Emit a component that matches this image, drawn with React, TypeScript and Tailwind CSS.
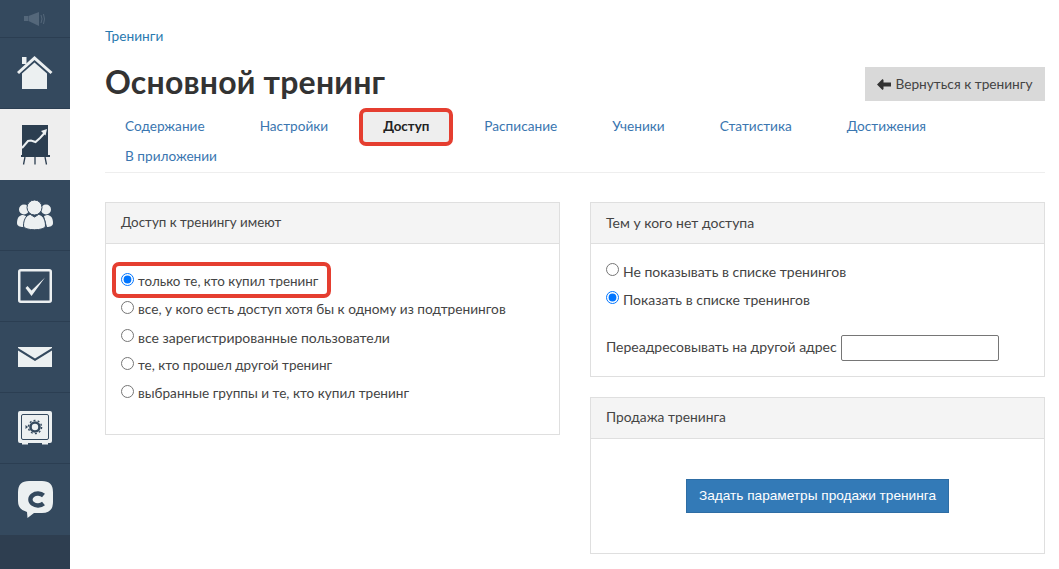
import type { ReactNode } from "react";

const sideClass = "flex h-[71px] items-center justify-center border-b border-[#2b3e52] bg-[#34495e]";

function Home() {
  return (
    <svg width="36" height="34" viewBox="0 0 36 34" fill="#ecf0f1">
      <rect x="5" y="1" width="4.5" height="7" />
      <path d="M17.5 0 L35.5 16 L33.5 18 L17.5 4 L2 18 L0 16 Z" />
      <path d="M5 17.5 L17.5 6.5 L30 17.5 V33 H5 Z" />
    </svg>
  );
}

function Chart() {
  return (
    <svg width="29" height="40" viewBox="0 0 29 40">
      <rect x="1" y="0" width="26" height="30" fill="#2c3e50" />
      <path d="M1 23 L7 16 L10 15.5 L14.5 17 L19 13 L23.5 8" fill="none" stroke="#ecf0f1" strokeWidth="2" />
      <path d="M20 6 L26 4 L24.5 10.5 Z" fill="#ecf0f1" />
      <rect x="0" y="30" width="29" height="2" fill="#2c3e50" />
      <path d="M4 32 L2.5 39.5 M14 32 V39.5 M24 32 L25.5 39.5" stroke="#2c3e50" strokeWidth="1.3" fill="none" />
    </svg>
  );
}

function People() {
  return (
    <svg width="36" height="31" viewBox="0 0 36 31" fill="#ecf0f1">
      <circle cx="7" cy="9.5" r="5" />
      <circle cx="29" cy="9.5" r="5" />
      <path d="M0 23 C0 17 3 15 6 15 L9 16 L6 27 C3 27 0 26 0 23 Z" />
      <path d="M36 23 C36 17 33 15 30 15 L27 16 L30 27 C33 27 36 26 36 23 Z" />
      <circle cx="17.5" cy="7.5" r="7.5" stroke="#34495e" strokeWidth="1" />
      <path d="M6.5 26 C6.5 18 10.5 14.5 13.5 14.5 L17.5 17 L21.5 14.5 C24.5 14.5 28.5 18 28.5 26 C28.5 31 6.5 31 6.5 26 Z" stroke="#34495e" strokeWidth="1" />
    </svg>
  );
}

function Check() {
  return (
    <svg width="34" height="34" viewBox="0 0 34 34" fill="none">
      <rect x="1.25" y="1.25" width="31.5" height="31.5" rx="1.5" stroke="#ecf0f1" strokeWidth="2.5" />
      <path d="M7.5 19 L9.5 17 L13.5 21.5 L27 8.5 L13.5 27 Z" fill="#ecf0f1" />
    </svg>
  );
}

function Mail() {
  return (
    <svg width="34" height="20" viewBox="0 0 34 20" fill="#ecf0f1">
      <path d="M0 1 L17 11.5 L34 1 V0 H0 Z" />
      <path d="M0 3.5 L17 14 L34 3.5 V20 H0 Z" />
    </svg>
  );
}

function Safe() {
  return (
    <svg width="34" height="34" viewBox="0 0 34 34">
      <path d="M2 0 H32 Q34 0 34 2 V30 Q34 32 32 32 H30 V33.5 H24 V32 H10 V33.5 H4 V32 H2 Q0 32 0 30 V2 Q0 0 2 0 Z" fill="#ecf0f1" />
      <rect x="3.5" y="3.5" width="27" height="25" rx="1.5" fill="none" stroke="#34495e" strokeWidth="1" />
      <circle cx="17" cy="16" r="4.5" fill="none" stroke="#34495e" strokeWidth="2.6" />
      <circle cx="17" cy="16" r="6.6" fill="none" stroke="#34495e" strokeWidth="1.4" strokeDasharray="2 2.2" />
      <path d="M7.5 14 L10 16 L7.5 18 Z" fill="#34495e" />
    </svg>
  );
}

function Chat() {
  return (
    <svg width="35" height="37" viewBox="0 0 35 37">
      <path d="M11 0 H24 Q35 0 35 11 V21 Q35 32 24 32 H16 L9.5 37 L9 31 Q0 29 0 20 V11 Q0 0 11 0 Z" fill="#ecf0f1" />
      <path d="M25.5 14.5 A7.5 6 0 1 0 25.5 22.5" fill="none" stroke="#34495e" strokeWidth="4.4" />
    </svg>
  );
}

function Speaker() {
  return (
    <svg width="22" height="14" viewBox="0 0 22 14" fill="#54677a">
      <rect x="0" y="4" width="4" height="5" />
      <path d="M4.5 4 L15 0 V14 L4.5 9 Z" />
      <path d="M17 3 Q19 7 17 11 M19.5 2 Q21.5 7 19.5 12" stroke="#54677a" fill="none" strokeWidth="1" />
    </svg>
  );
}

function Panel({ title, className, titleSize, children }: { title: string; className: string; titleSize: string; children: ReactNode }) {
  return (
    <div className={`border border-[#dfdfdf] bg-white ${className}`}>
      <div className={`flex h-[41px] items-center border-b border-[#dfdfdf] bg-[#f4f4f4] px-[15px] pb-[2px] text-[#444] ${titleSize}`}>
        {title}
      </div>
      {children}
    </div>
  );
}

function Radio({ label, checked, name, size }: { label: string; checked?: boolean; name: string; size: string }) {
  return (
    <label className={`flex h-7 items-center text-[#444] ${size}`}>
      <input type="radio" name={name} defaultChecked={checked} className="mr-[4px] -mt-[4px] size-[13px]" />
      {label}
    </label>
  );
}

const tabs = ["Содержание", "Настройки", "Доступ", "Расписание", "Ученики", "Статистика", "Достижения", "В приложении"];

export default function App() {
  return (
    <div className="flex h-[569px] w-[1059px] overflow-hidden bg-white font-['Lato',sans-serif]">
      {/* sidebar */}
      <div className="flex w-[70px] shrink-0 flex-col bg-[#2e3e50]">
        <div className="flex h-[38px] items-center justify-center border-b border-[#2b3e52] bg-[#34495e]"><Speaker /></div>
        <div className={sideClass}><Home /></div>
        <div className="flex h-[71px] items-center justify-center bg-[#eeeeee]"><Chart /></div>
        <div className={sideClass}><People /></div>
        <div className={sideClass}><Check /></div>
        <div className={sideClass}><Mail /></div>
        <div className={sideClass}><Safe /></div>
        <div className="flex h-[71px] items-center justify-center bg-[#34495e]"><Chat /></div>
      </div>

      {/* content */}
      <div className="flex-1 pl-[35px] pr-[14px]">
        <div className="pt-[27px] text-[13.7px] leading-[17px] text-[#2a7ab0]">Тренинги</div>

        <div className="mt-[23px] flex h-[38px] items-start justify-between">
          <h1 className="-mt-[3px] text-[32px] leading-[36px] font-bold tracking-[0.2px] text-[#333]">Основной тренинг</h1>
          <button className="flex h-[34px] w-[180px] items-center justify-center bg-[#d9d9d9] text-[13.7px] text-[#444]">
            <svg width="14" height="11" viewBox="0 0 14 11" className="mr-[4px]" fill="#333">
              <path d="M0 5.5 L5.5 0 L6.5 1 V3.5 H14 V7.5 H6.5 V10 L5.5 11 Z" />
            </svg>
            Вернуться к тренингу
          </button>
        </div>

        <div className="flex h-[68px] flex-wrap content-start border-b border-[#eeeeee] pt-[6px] text-[13.65px] text-[#3a76b0]">
          {tabs.map((t) =>
            t === "Доступ" ? (
              <div key={t} className="-mt-[3px] -mb-[5px] -ml-[4px] mr-[11px] flex h-[38px] items-center rounded-[7px] border-4 border-[#e53e30] bg-[#eeeeee] px-[20px] pb-[2px] text-[13.4px] font-bold text-[#222]">
                {t}
              </div>
            ) : (
              <div key={t} className="mr-[15px] flex h-[30px] items-center px-[20px]">
                {t}
              </div>
            ),
          )}
        </div>

        <div className="mt-[29px] grid grid-cols-2 gap-x-[30px]">
          <Panel title="Доступ к тренингу имеют" titleSize="text-[13.4px]" className="relative h-[233px]">
            <div className="px-[15px] pt-[23px]">
              <Radio name="a" size="text-[13.4px]" label="только те, кто купил тренинг" checked />
              <Radio name="a" size="text-[13.7px]" label="все, у кого есть доступ хотя бы к одному из подтренингов" />
              <Radio name="a" size="text-[14px]" label="все зарегистрированные пользователи" />
              <Radio name="a" size="text-[13.5px]" label="те, кто прошел другой тренинг" />
              <Radio name="a" size="text-[13.6px]" label="выбранные группы и те, кто купил тренинг" />
            </div>
            {/* red annotation */}
            <div className="absolute top-[59px] left-[6px] h-[36px] w-[219px] rounded-[7px] border-4 border-[#e53e30]" />
          </Panel>

          <div className="flex flex-col gap-y-[20px]">
            <Panel title="Тем у кого нет доступа" titleSize="text-[14px]" className="h-[175px]">
              <div className="px-[15px] pt-[13px]">
                <Radio name="b" size="text-[14px]" label="Не показывать в списке тренингов" />
                <Radio name="b" size="text-[14px]" label="Показать в списке тренингов" checked />
                <div className="mt-[22px] flex items-center text-[14px] text-[#444]">
                  <span className="-mt-[3px]">Переадресовывать на другой адрес</span>
                  <input className="ml-[4px] h-[26px] w-[158px] rounded-[2px] border border-[#767676]" />
                </div>
              </div>
            </Panel>
            <Panel title="Продажа тренинга" titleSize="text-[13.8px]" className="h-[157px]">
              <div className="flex justify-center pt-[40px]">
                <button className="h-[34px] w-[263px] border border-[#2e6da4] bg-[#337ab7] font-['Liberation_Sans',sans-serif] text-[13.65px] text-white">
                  Задать параметры продажи тренинга
                </button>
              </div>
            </Panel>
          </div>
        </div>
      </div>
    </div>
  );
}
